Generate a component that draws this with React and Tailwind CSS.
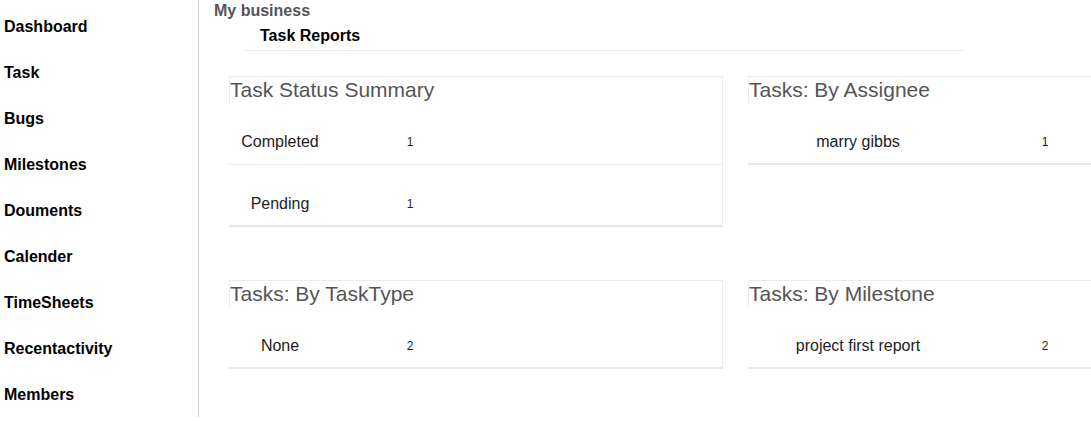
const navItems = [
  'Dashboard',
  'Task',
  'Bugs',
  'Milestones',
  'Douments',
  'Calender',
  'TimeSheets',
  'Recentactivity',
  'Members',
]

const reports = [
  {
    title: 'Task Status Summary',
    cols: ['w-[102px]', 'w-[158px]'],
    rows: [
      ['Completed', 1],
      ['Pending', 1],
    ],
  },
  {
    title: 'Tasks: By Assignee',
    cols: ['w-[220px]', 'w-[154px]'],
    rows: [['marry gibbs', 1]],
  },
  {
    title: 'Tasks: By TaskType',
    cols: ['w-[102px]', 'w-[158px]'],
    rows: [['None', 2]],
  },
  {
    title: 'Tasks: By Milestone',
    cols: ['w-[220px]', 'w-[154px]'],
    rows: [['project first report', 2]],
  },
]

const ReportCard = ({ title, cols, rows }) => (
  <div className="w-[494px] self-start border-t border-r border-[#ebebeb]">
    {/* Card heading */}
    <div className="h-[26px] border-l border-[#ebebeb] text-[21px] leading-[25px] text-[#555]">
      {title}
    </div>
    {/* Rows */}
    {rows.map(([label, count], i) => (
      <div
        key={label}
        className={`flex h-[62px] pt-[30px] ${
          i === rows.length - 1 ? 'border-b-2 border-[#e6e6e6]' : 'border-b border-[#ebebeb]'
        }`}
      >
        <div className={`${cols[0]} text-center text-[16px] leading-[18px] text-[#222]`}>{label}</div>
        <div className={`${cols[1]} text-center text-[12px] leading-[18px] text-[#222]`}>{count}</div>
      </div>
    ))}
  </div>
)

export default function App() {
  return (
    <div className="flex h-[421px] w-[1091px] overflow-hidden bg-white font-['Liberation_Sans',Arial,sans-serif]">
      {/* Sidebar */}
      <aside className="h-[417px] w-[199px] shrink-0 border-r border-[#cfcfcf]">
        <ul className="pt-[4px]">
          {navItems.map((item) => (
            <li key={item} className="px-[4px] text-[16px] font-bold leading-[46px] text-black">
              {item}
            </li>
          ))}
        </ul>
      </aside>

      {/* Main content */}
      <main className="min-w-0 flex-1 pl-[15px] pt-[1px]">
        <div className="text-[16px] font-bold leading-[20px] text-[#555]">My business</div>
        <div className="ml-[29px] mt-[5px] w-[720px] border-b border-[#ebebeb] pb-[4px] pl-[17px] text-[16px] font-bold leading-[20px] text-black">
          Task Reports
        </div>

        <div className="ml-[15px] mt-[25px] grid w-[1013px] grid-cols-[494px_494px] gap-x-[25px] gap-y-[53px]">
          {reports.map((r) => (
            <ReportCard key={r.title} {...r} />
          ))}
        </div>
      </main>
    </div>
  )
}
